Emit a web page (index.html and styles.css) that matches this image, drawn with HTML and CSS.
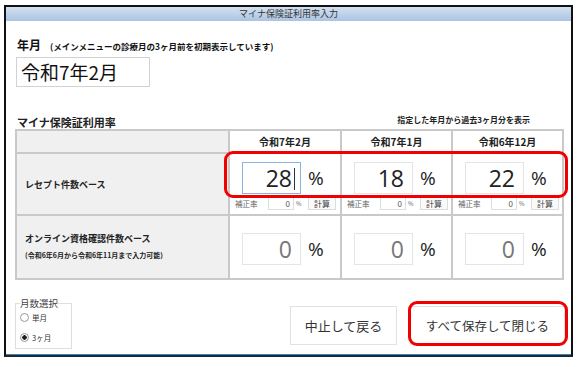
FILE: index.html
```html
<!DOCTYPE html>
<html lang="ja">
<head>
    <meta charset="UTF-8">
    <meta name="viewport" content="width=device-width, initial-scale=1.0">
    <title>マイナ保険証利用率入力</title>
    <link rel="stylesheet" href="styles.css">
</head>
<body>

<div class="window">
    <div class="titlebar">マイナ保険証利用率入力</div>

    <div class="content">
        <div class="ym-label">年月<span class="ym-note">(メインメニューの診療月の3ヶ月前を初期表示しています)</span></div>
        <div class="ym-box">令和7年2月</div>

        <div class="rate-head">
            <span class="rate-title">マイナ保険証利用率</span>
            <span class="rate-note">指定した年月から過去3ヶ月分を表示</span>
        </div>

        <div class="rate-grid">
            <div class="cell gray"></div>
            <div class="cell head">令和7年2月</div>
            <div class="cell head">令和7年1月</div>
            <div class="cell head">令和6年12月</div>

            <div class="cell gray label">レセプト件数ベース</div>
            <div class="cell val">
                <div class="main"><div class="num focus">28<span class="caret"></span></div><span class="pct">%</span></div>
                <div class="sub"><span class="sub-label">補正率</span><div class="sub-num">0</div><span class="sub-pct">%</span><span class="calc">計算</span></div>
            </div>
            <div class="cell val">
                <div class="main"><div class="num">18</div><span class="pct">%</span></div>
                <div class="sub"><span class="sub-label">補正率</span><div class="sub-num">0</div><span class="sub-pct">%</span><span class="calc">計算</span></div>
            </div>
            <div class="cell val">
                <div class="main"><div class="num">22</div><span class="pct">%</span></div>
                <div class="sub"><span class="sub-label">補正率</span><div class="sub-num">0</div><span class="sub-pct">%</span><span class="calc">計算</span></div>
            </div>

            <div class="cell gray label">
                <span>オンライン資格確認件数ベース</span>
                <span class="label-note">(令和6年6月から令和6年11月まで入力可能)</span>
            </div>
            <div class="cell val val-online">
                <div class="main"><div class="num empty">0</div><span class="pct">%</span></div>
            </div>
            <div class="cell val val-online">
                <div class="main"><div class="num empty">0</div><span class="pct">%</span></div>
            </div>
            <div class="cell val val-online">
                <div class="main"><div class="num empty">0</div><span class="pct">%</span></div>
            </div>
        </div>

        <div class="bottom">
            <fieldset class="months">
                <legend>月数選択</legend>
                <div class="radio"><span class="dot"></span>単月</div>
                <div class="radio"><span class="dot checked"></span>3ヶ月</div>
            </fieldset>
            <div class="buttons">
                <button class="btn btn-back">中止して戻る</button>
                <button class="btn btn-save">すべて保存して閉じる</button>
            </div>
        </div>
    </div>

    <div class="mark mark-rows"></div>
    <div class="mark mark-save"></div>
</div>

</body>
</html>
```

FILE: styles.css
```css
body {
    margin: 0;
    padding: 0;
    background-color: #fff;
    color: #222;
    font-family: "Noto Sans CJK JP", sans-serif;
}
.window {
    position: relative;
    margin: 5px 0 0 4px;
    width: 569px;
    height: 352px;
    box-sizing: border-box;
    border: 2px solid #111;
    border-bottom-color: #1c2833;
    box-shadow: inset 0 -1px 0 #3d86b3;
}
.titlebar {
    height: 14px;
    line-height: 14px;
    font-size: 9px;
    color: #333;
    text-align: center;
    background: linear-gradient(#d3e0f1, #abc4e2);
}
.content {
    padding: 0 8px 0 9px;
}
.ym-label {
    margin: 17px 0 0 2px;
    font-size: 12px;
    font-weight: bold;
    line-height: 14px;
    color: #111;
}
.ym-note {
    margin-left: 9px;
    font-size: 8.5px;
}
.ym-box {
    margin: 4px 0 0 1px;
    width: 134px;
    height: 30px;
    box-sizing: border-box;
    border: 1px solid #d2d2d2;
    padding-left: 4px;
    font-size: 19px;
    line-height: 28px;
    color: #111;
}
.rate-head {
    margin-top: 26px;
    height: 16px;
    display: flex;
    justify-content: space-between;
    align-items: flex-end;
    line-height: 14px;
    font-weight: bold;
}
.rate-title {
    margin-left: 2px;
    font-size: 11px;
}
.rate-note {
    margin-right: 33px;
    font-size: 8px;
    padding-bottom: 2px;
}
.rate-grid {
    display: grid;
    grid-template-columns: 211px 110px 109px 109px;
    grid-template-rows: 21px 60px 62px;
    gap: 2px;
    padding: 2px;
    width: 549px;
    box-sizing: border-box;
    background-color: #c9c9c9;
}
.cell {
    background-color: #fff;
}
.gray {
    background-color: #f0f0f0;
}
.head {
    display: flex;
    align-items: center;
    justify-content: center;
    font-size: 10px;
    font-weight: bold;
}
.label {
    display: flex;
    flex-direction: column;
    justify-content: center;
    padding-left: 8px;
    font-size: 9px;
    font-weight: bold;
    line-height: 15px;
}
.label-note {
    margin-top: 2px;
    font-size: 7px;
}
.val {
    padding: 8px 0 0 5px;
}
.val-online {
    padding-top: 17px;
}
.main {
    display: flex;
    align-items: center;
    margin-left: 7px;
}
.num {
    width: 59px;
    height: 32px;
    box-sizing: border-box;
    border: 1px solid #e4e4e4;
    padding-right: 8px;
    text-align: right;
    font-family: "Open Sans", sans-serif;
    font-size: 23px;
    line-height: 30px;
    color: #222;
}
.num.focus {
    border-color: #86b4e4;
    padding-right: 5px;
}
.num.empty {
    color: #777;
}
.caret {
    display: inline-block;
    width: 1px;
    height: 22px;
    margin-left: 2px;
    vertical-align: -3px;
    background-color: #333;
}
.pct {
    margin-left: 7px;
    font-family: "Open Sans", sans-serif;
    font-size: 19px;
    color: #222;
}
.sub {
    display: flex;
    align-items: center;
    margin-top: 3px;
    height: 13px;
    color: #666;
}
.sub-label {
    width: 33px;
    font-size: 7.5px;
}
.sub-num {
    width: 26px;
    height: 13px;
    box-sizing: border-box;
    border: 1px solid #ddd;
    padding-right: 3px;
    text-align: right;
    font-size: 8px;
    line-height: 11px;
    color: #555;
}
.sub-pct {
    width: 10px;
    margin-left: 2px;
    font-size: 6px;
}
.calc {
    margin-left: 2px;
    width: 28px;
    height: 13px;
    box-sizing: border-box;
    border: 1px solid #ddd;
    background-color: #fafafa;
    text-align: center;
    font-size: 8px;
    line-height: 11px;
    color: #444;
}
.bottom {
    display: flex;
    align-items: flex-start;
}
.months {
    margin: 18px 0 0 0;
    padding: 0 0 0 4px;
    width: 57px;
    height: 51px;
    box-sizing: border-box;
    border: 1px solid #dedede;
}
.months legend {
    padding: 0;
    font-size: 9.5px;
    line-height: 11px;
    color: #444;
}
.radio {
    display: flex;
    align-items: center;
    height: 12px;
    margin-top: 2px;
    font-size: 7.5px;
    color: #333;
}
.radio + .radio {
    margin-top: 8px;
}
.dot {
    width: 7px;
    height: 7px;
    margin-right: 3px;
    border: 1px solid #999;
    border-radius: 50%;
    background-color: #fff;
}
.dot.checked {
    background: radial-gradient(circle, #222 0 2px, #fff 2.5px);
}
.buttons {
    display: flex;
    gap: 13px;
    margin: 26px -2px 0 auto;
}
.btn {
    height: 39px;
    padding: 0;
    border: 1px solid #e2e2e2;
    background-color: #fff;
    font-family: "Noto Sans CJK JP", sans-serif;
    font-size: 13px;
    color: #333;
}
.btn-back {
    width: 107px;
}
.btn-save {
    width: 155px;
    font-size: 12.5px;
}
.mark {
    position: absolute;
    box-sizing: border-box;
    border: 3.5px solid #f00000;
    border-radius: 9px;
}
.mark-rows {
    left: 218px;
    top: 144px;
    width: 344px;
    height: 47px;
}
.mark-save {
    left: 402px;
    top: 294px;
    width: 160px;
    height: 45px;
}
```
